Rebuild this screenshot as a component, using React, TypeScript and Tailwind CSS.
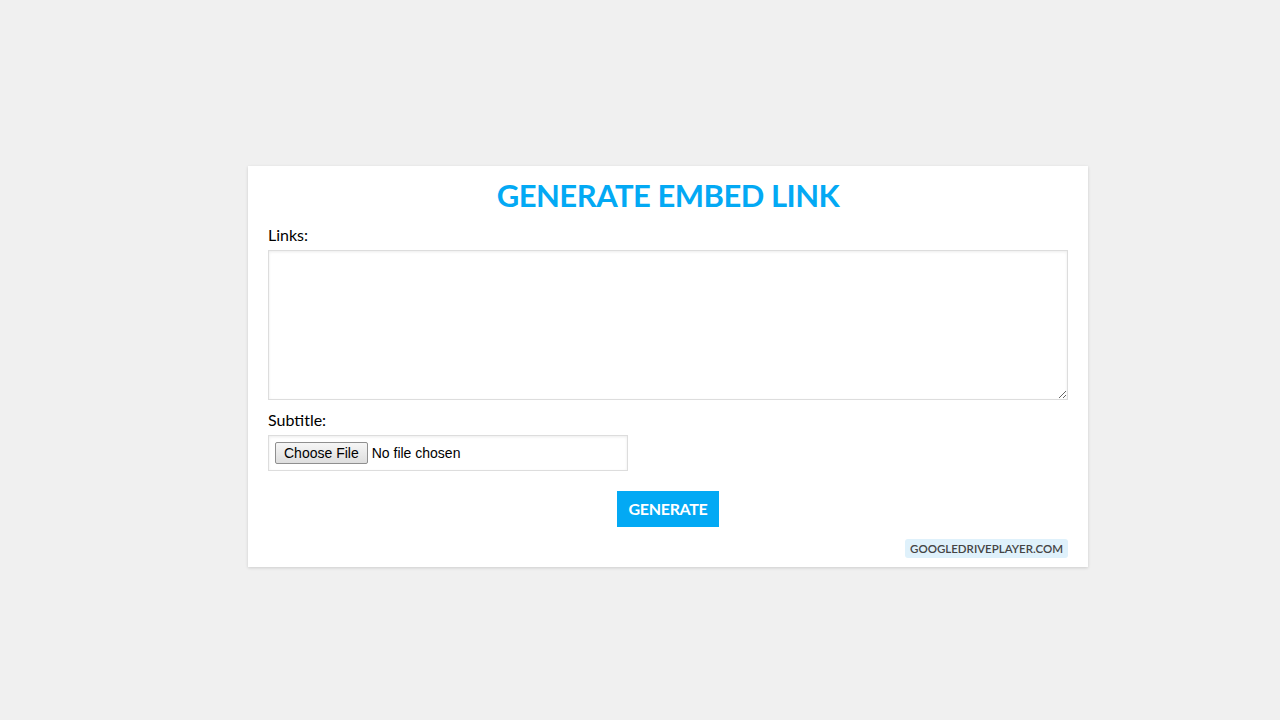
import React from "react";

export default function App() {
  const font = { fontFamily: "Lato, 'Open Sans', sans-serif" };
  return (
    <div className="min-h-[720px] w-full bg-[#f0f0f0] flex justify-center pl-[56px] pt-[166px]" style={font}>
      <div className="w-[840px] h-[401px] bg-white px-5 pt-[10px] shadow-[0_1px_3px_rgba(0,0,0,0.15)] flex flex-col">
        <h1 className="text-center text-[31px] leading-[38px] font-bold text-[#03a9f4] tracking-[-0.5px]">
          GENERATE EMBED LINK
        </h1>
        <label className="mt-[12px] text-[16px] leading-[18px] text-black">Links:</label>
        <textarea className="mt-[6px] w-[800px] h-[150px] border border-[#dddddd] shadow-[inset_0_1px_3px_rgba(0,0,0,0.08)] resize-y outline-none" />
        <label className="mt-[11px] text-[16px] leading-[18px] text-black">Subtitle:</label>
        <div className="mt-[6px] w-[360px] h-[36px] border border-[#dddddd] shadow-[inset_0_1px_3px_rgba(0,0,0,0.08)] flex items-center pl-[6px]" style={{ fontFamily: "'Liberation Sans', Arial, sans-serif" }}>
          <span className="h-[22px] px-[8px] border border-[#8f8f8f] rounded-[2px] bg-gradient-to-b from-[#f6f6f6] to-[#dedede] text-[14px] leading-[20px] text-black">
            Choose File
          </span>
          <span className="ml-[4px] text-[14px] text-black">No file chosen</span>
        </div>
        <div className="mt-[20px] flex justify-center">
          <button className="w-[102px] h-[36px] bg-[#03a9f4] text-white text-[16px] font-bold tracking-[-0.3px]">
            GENERATE
          </button>
        </div>
        <div className="mt-[12px] flex justify-end">
          <span className="h-[19px] px-[5px] rounded-[3px] bg-[#dff1fb] text-[#444] text-[11.5px] leading-[19px] font-semibold">
            GOOGLEDRIVEPLAYER.COM
          </span>
        </div>
      </div>
    </div>
  );
}
